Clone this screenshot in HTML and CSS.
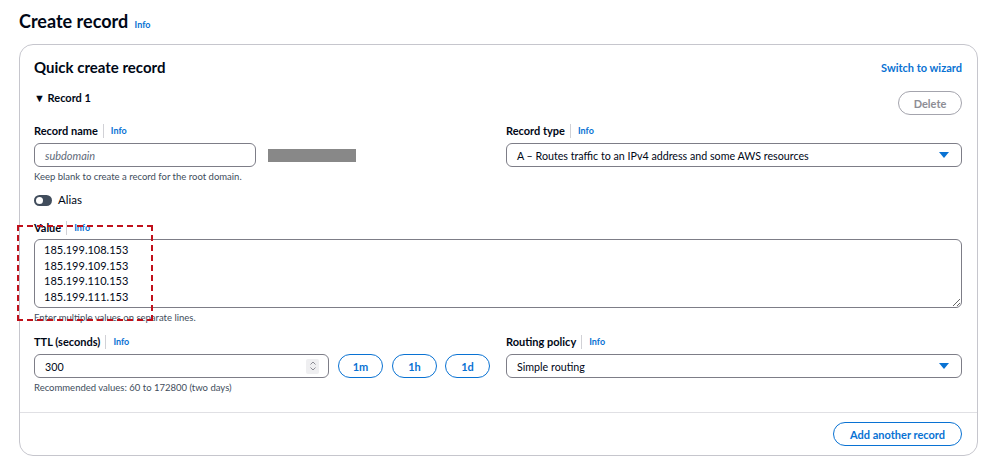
FILE: index.html
```html
<!DOCTYPE html>
<html>
<head>
	<title>Create record</title>
	<meta charset="utf-8">
	<meta name="viewport" content="width=device-width, initial-scale=1">
	<link rel="stylesheet" href="styles.css">
</head>
<body>

	<div class="page">
		<h1 class="title">Create record <a class="info" href="#">Info</a></h1>

		<div class="panel">
			<div class="panel_head">
				<h2>Quick create record</h2>
				<a class="link" href="#">Switch to wizard</a>
			</div>

			<div class="record_row">
				<div class="record_toggle">&#9660; Record 1</div>
				<button class="btn btn_disabled">Delete</button>
			</div>

			<div class="cols">
				<div class="field">
					<div class="label">Record name <span class="sep"></span><a class="info" href="#">Info</a></div>
					<div class="name_row">
						<div class="input name_input"><span class="placeholder">subdomain</span></div>
						<div class="redacted"></div>
					</div>
					<div class="hint">Keep blank to create a record for the root domain.</div>
				</div>
				<div class="field">
					<div class="label">Record type <span class="sep"></span><a class="info" href="#">Info</a></div>
					<div class="input select">
						<span>A &ndash; Routes traffic to an IPv4 address and some AWS resources</span>
						<span class="caret"></span>
					</div>
				</div>
			</div>

			<div class="alias">
				<span class="switch"><span class="knob"></span></span>
				<span>Alias</span>
			</div>

			<div class="value_field">
				<div class="label">Value <span class="sep"></span><a class="info" href="#">Info</a></div>
				<textarea class="textarea" readonly>185.199.108.153
185.199.109.153
185.199.110.153
185.199.111.153</textarea>
				<div class="hint">Enter multiple values on separate lines.</div>
				<div class="highlight"></div>
			</div>

			<div class="cols cols_ttl">
				<div class="field">
					<div class="label">TTL (seconds) <span class="sep"></span><a class="info" href="#">Info</a></div>
					<div class="ttl_row">
						<div class="input ttl_input">
							<span>300</span>
							<span class="spinner">
								<svg width="8" height="12" viewBox="0 0 8 12"><path d="M1.5 4.5 L4 2 L6.5 4.5 M1.5 7.5 L4 10 L6.5 7.5" fill="none" stroke="#8d8d95" stroke-width="1"/></svg>
							</span>
						</div>
						<button class="btn btn_small">1m</button>
						<button class="btn btn_small">1h</button>
						<button class="btn btn_small">1d</button>
					</div>
					<div class="hint">Recommended values: 60 to 172800 (two days)</div>
				</div>
				<div class="field">
					<div class="label">Routing policy <span class="sep"></span><a class="info" href="#">Info</a></div>
					<div class="input select">
						<span>Simple routing</span>
						<span class="caret"></span>
					</div>
				</div>
			</div>

			<div class="panel_foot">
				<button class="btn">Add another record</button>
			</div>
		</div>
	</div>

</body>
</html>
```

FILE: styles.css
```css
* {
	box-sizing: border-box;
}

body {
	margin: 0px;
	padding: 0px;
	background: white;
	font-family: Lato, "Open Sans", sans-serif;
	color: #000716;
}

.page {
	padding: 10px 14px 0px 19px;
}

a {
	text-decoration: none;
}

.title {
	margin: 0px;
	font-size: 18px;
	line-height: 22px;
	font-weight: 700;
}

.info {
	color: #0972d3;
	font-size: 9px;
	font-weight: 700;
	margin-left: 2px;
}

.panel {
	margin-top: 8px;
	width: 959px;
	border: 1px solid #c6c6cd;
	border-radius: 14px;
	position: relative;
}

.panel_head {
	display: flex;
	justify-content: space-between;
	align-items: center;
	padding: 13px 15px 0px 14px;
}

h2 {
	margin: 0px;
	font-size: 15px;
	line-height: 18px;
}

.link {
	color: #0972d3;
	font-size: 11px;
	font-weight: 700;
}

.record_row {
	display: flex;
	justify-content: space-between;
	align-items: flex-start;
	padding: 15px 15px 0px 14px;
}

.record_toggle {
	font-size: 11px;
	line-height: 14px;
	font-weight: 700;
}

.btn {
	font-family: inherit;
	background: white;
	border: 1.5px solid #0972d3;
	color: #0972d3;
	border-radius: 14px;
	font-size: 11px;
	font-weight: 700;
	height: 24px;
	padding: 0px 16px;
	cursor: pointer;
}

.btn_disabled {
	border-color: #a4a4ad;
	color: #8d8d95;
	width: 64px;
	padding: 0px;
}

.btn_small {
	width: 45px;
	padding: 0px;
	margin-left: 9px;
}

.btn_small:last-child {
	margin-left: 8px;
}

.cols {
	display: grid;
	grid-template-columns: 456px 456px;
	column-gap: 16px;
	padding: 9px 15px 0px 14px;
}

.cols_ttl {
	padding-top: 11px;
}

.label {
	display: flex;
	align-items: center;
	font-size: 11px;
	line-height: 14px;
	font-weight: 700;
}

.label .info {
	margin-left: 0px;
}

.sep {
	display: inline-block;
	width: 1px;
	height: 14px;
	background: #d1d1d6;
	margin: 0px 7px 0px 5px;
}

.input {
	margin-top: 5px;
	height: 24px;
	border: 1.5px solid #7d7d87;
	border-radius: 6px;
	display: flex;
	align-items: center;
	padding: 0px 10px;
	font-size: 10.7px;
	background: white;
}

.name_row {
	display: flex;
	align-items: center;
}

.name_input {
	width: 222px;
}

.placeholder {
	font-style: italic;
	color: #5f6b7a;
	font-size: 11px;
}

.redacted {
	margin: 5px 0px 0px 12px;
	width: 88px;
	height: 13px;
	background: #888888;
}

.select {
	justify-content: space-between;
}

.caret {
	width: 0px;
	height: 0px;
	border-left: 5px solid transparent;
	border-right: 5px solid transparent;
	border-top: 6px solid #0972d3;
	margin-right: 2px;
}

.hint {
	margin-top: 3px;
	font-size: 9.5px;
	line-height: 13px;
	color: #414d5c;
}

.alias {
	display: flex;
	align-items: center;
	padding: 9px 15px 0px 14px;
	font-size: 11.5px;
	line-height: 16px;
}

.switch {
	display: inline-block;
	width: 18px;
	height: 11px;
	border-radius: 6px;
	background: #414d5c;
	position: relative;
	margin-right: 6px;
}

.knob {
	position: absolute;
	left: 2px;
	top: 2px;
	width: 7px;
	height: 7px;
	border-radius: 50%;
	background: white;
}

.value_field {
	position: relative;
	padding: 13px 15px 0px 14px;
}

.textarea {
	display: block;
	margin-top: 4px;
	width: 928px;
	height: 69px;
	border: 1.5px solid #7d7d87;
	border-radius: 6px;
	font-family: inherit;
	font-size: 11px;
	line-height: 15.6px;
	padding: 2px 9px;
	color: #000716;
	resize: vertical;
	outline: none;
}

.highlight {
	position: absolute;
	left: -3px;
	top: 17px;
	width: 136px;
	height: 96px;
	border: 2px dashed #c0101a;
}

.ttl_row {
	display: flex;
	align-items: flex-end;
}

.ttl_input {
	width: 295px;
	justify-content: space-between;
	padding-right: 9px;
}

.spinner {
	display: flex;
	align-items: center;
	justify-content: center;
	width: 13px;
	height: 15px;
	background: #efeff1;
	border-radius: 2px;
}

.panel_foot {
	margin-top: 18px;
	border-top: 1px solid #e0e0e4;
	display: flex;
	justify-content: flex-end;
	padding: 9px 15px 9px 15px;
}
```
